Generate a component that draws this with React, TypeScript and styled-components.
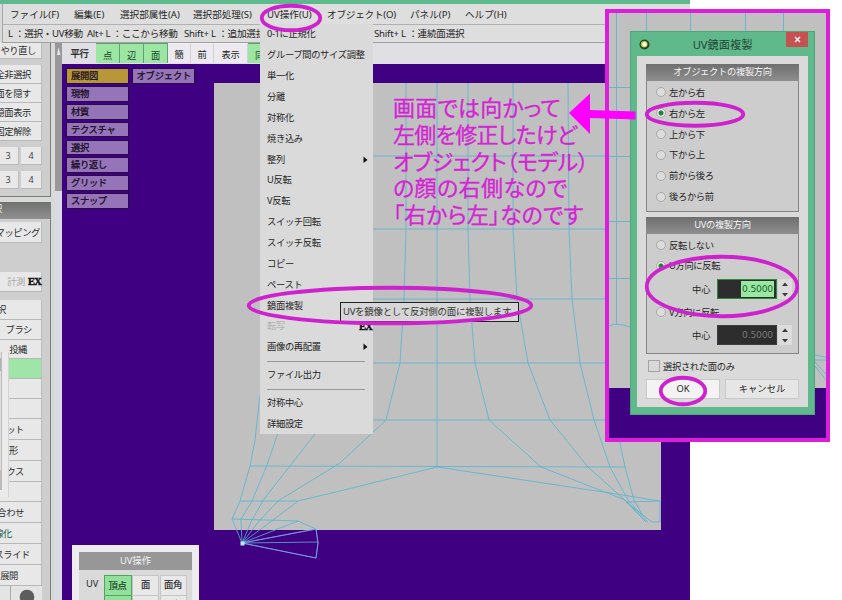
import React from "react";
import styled, { createGlobalStyle, css } from "styled-components";

const cjk = `"Noto Sans", "Noto Sans CJK JP", sans-serif`;
const magenta = "#cf22cf";

const GlobalStyle = createGlobalStyle`
  * { box-sizing: border-box; }
  body { margin: 0; background: #fff; font-family: ${cjk}; font-size: 9.3px; color: #262626; overflow: hidden; }
`;

const Page = styled.div`
  position: relative;
  width: 842px;
  height: 600px;
  overflow: hidden;
  background: #fff;
`;

const AppWindow = styled.div`
  display: flex;
  flex-direction: column;
  width: 690px;
  height: 600px;
  overflow: hidden;
  background: #d9d9d9;
`;

const TitleStrip = styled.div`
  flex: none;
  height: 4px;
  background: #5cba8c;
`;

const Bars = styled.div`
  flex: none;
  height: 39px;
  margin-left: 2px;
  border-left: 1px solid #a8a8a8;
  border-bottom: 1px solid #a0a0a0;
  background: #dedede;
`;

const Bar = styled.div<{ $h: number; $line?: boolean }>`
  display: flex;
  align-items: center;
  height: ${(p) => p.$h}px;
  padding-bottom: 1px;
  border-bottom: ${(p) => (p.$line ? "1px solid #b0b0b0" : "none")};
`;

const BarText = styled.span<{ $w: number; $ls?: number; $size?: number }>`
  flex: none;
  width: ${(p) => p.$w}px;
  white-space: nowrap;
  font-size: ${(p) => p.$size ?? 9.6}px;
  letter-spacing: ${(p) => p.$ls ?? 0}px;
`;

const Body = styled.div`
  display: flex;
  flex: 1;
  min-height: 0;
`;

const Sidebar = styled.aside`
  position: relative;
  flex: none;
  width: 55px;
  display: flex;
  flex-direction: column;
  gap: 5px;
  background: #d8dad8;
`;

const Group = styled.div<{ $h: number }>`
  flex: none;
  width: 51px;
  height: ${(p) => p.$h}px;
  padding-right: 8px;
  background: #cecece;
  border-right: 1px solid #7c7c7c;
  border-bottom: 1px solid #7c7c7c;
  overflow: hidden;
`;

const GroupHeader = styled.div`
  height: 17px;
  margin-right: -8px;
  text-indent: -7px;
  line-height: 13px;
  color: #eee;
  background: linear-gradient(#707070, #909090);
`;

const SideButton = styled.div<{ $h?: number; $pr?: number; $mt?: number; $tone?: string; $color?: string; $ls?: number }>`
  display: flex;
  align-items: center;
  justify-content: flex-end;
  width: 42px;
  height: ${(p) => p.$h ?? 19}px;
  margin-top: ${(p) => p.$mt ?? 0}px;
  padding-right: ${(p) => p.$pr ?? 10}px;
  padding-bottom: 1px;
  white-space: nowrap;
  letter-spacing: ${(p) => p.$ls ?? -0.4}px;
  color: ${(p) => p.$color ?? "#2c2c2c"};
  background: ${(p) => p.$tone ?? "#e8e8e8"};
  border-bottom: 1px solid #b8b8b8;
  border-right: 1px solid #bdbdbd;
`;

const NumberRow = styled.div`
  display: grid;
  grid-template-columns: 19px 21px;
  gap: 2px;
  height: 18px;
  margin-top: 6px;
  line-height: 17px;
  color: #444;
  font-size: 9px;

  & > span {
    text-align: center;
    background: #e8e8e8;
    border-right: 1px solid #bdbdbd;
    border-bottom: 1px solid #b8b8b8;
  }
  & > span:first-child { padding-right: 2px; }
`;

const Ex = styled.b`
  font-family: "Liberation Serif", serif;
  font-size: 10.5px;
  font-weight: 700;
  letter-spacing: -0.8px;
  color: #111;
  -webkit-text-stroke: 0.4px #111;
`;

const Faded = styled.span`
  color: #aaa;
  margin-right: 3px;
`;

const DockedFlap = styled.div`
  position: absolute;
  left: 0;
  top: 309px;
  width: 9px;
  height: 145px;
  padding: 0 6px 7px 0;
  background: #ebebeb;
  border-right: 1px solid #d4d4d4;

  &::before {
    content: "";
    display: block;
    height: 100%;
    background: linear-gradient(#e0e0e0 0 6px, #b4b4b4 6px 19px, #dedede 19px 118px, #bdbdbd 118px);
    border-right: 1px solid #bbb;
  }
`;

const Knob = styled.div`
  display: grid;
  grid-template-columns: 10px 32px;
  width: 42px;
  height: 16px;
  background: #e4e4e4;
  overflow: hidden;

  & > span + span { border-left: 1px solid #aaa; padding: 3px 0 0 8px; }
`;

const ScrollTrack = styled.div`
  flex: none;
  width: 7px;
  background: linear-gradient(#98989a 0 148px, #dadae4 148px);
  & svg { display: block; }
`;

const Main = styled.div`
  flex: 1;
  display: flex;
  flex-direction: column;
  min-width: 0;
`;

const Toolbar = styled.div`
  flex: none;
  display: flex;
  height: 21px;
  padding-left: 1px;
  background: #e0dfe4;
`;

const Tool = styled.span<{ $w: number; $on?: boolean; $plain?: boolean }>`
  display: flex;
  align-items: center;
  justify-content: center;
  width: ${(p) => p.$w}px;
  height: 20px;
  padding-top: ${(p) => (p.$on ? 2 : 0)}px;
  white-space: nowrap;
  letter-spacing: -0.3px;
  -webkit-text-stroke: ${(p) => (p.$plain ? 0.3 : 0)}px;
  ${(p) =>
    !p.$plain &&
    css`
      background: ${p.$on ? "#9be6a2" : "#eceaf0"};
      border-right: 1px solid ${p.$on ? "#63a070" : "#d2d0d6"};
      border-top: 1px solid ${p.$on ? "#63a070" : "#f2f2f2"};
      color: ${p.$on ? "#1c4426" : "#222"};
    `}
`;

const Canvas = styled.div`
  position: relative;
  flex: 1;
  background: #400082;
  overflow: hidden;
`;

const Mesh = styled.svg`
  position: absolute;
  left: -62px;
  top: -64px;
  display: block;
`;

const LabelGrid = styled.div`
  position: absolute;
  left: 4px;
  top: 4px;
  display: grid;
  grid-template-columns: 63px 63px;
  grid-auto-rows: 15.8px;
  gap: 2.1px 2.5px;
`;

const Label = styled.div<{ $gold?: boolean; $ls?: number }>`
  padding-left: 4px;
  line-height: 14.5px;
  white-space: nowrap;
  -webkit-text-stroke: 0.25px #150b20;
  letter-spacing: ${(p) => p.$ls ?? -0.35}px;
  color: #150b20;
  background: ${(p) => (p.$gold ? "#b8973a" : "#9674b8")};
  border: 1px solid #2a0c4a;
  &:nth-child(n + 3) { grid-column: 1; }
`;

const UvPanel = styled.div`
  position: absolute;
  left: 10px;
  top: 481px;
  width: 127px;
  height: 70px;
  border: 7px solid #ececf0;
  background: #dadada;
`;

const UvHeader = styled.div`
  height: 18px;
  line-height: 17px;
  text-align: center;
  color: #f4f4f4;
  background: #979797;
`;

const UvRow = styled.div`
  display: grid;
  grid-template-columns: 24px 28px 27px 27px;
  gap: 0.5px;
  margin-top: 4.5px;
  height: 19px;
  & + & { margin-top: 1px; }
  & > span:first-child { padding-left: 7px; line-height: 18px; }
`;

const UvToggle = styled.span<{ $on?: boolean }>`
  line-height: ${(p) => (p.$on ? 19 : 17)}px;
  text-align: center;
  letter-spacing: -0.2px;
  -webkit-text-stroke: 0.2px;
  background: ${(p) => (p.$on ? "#93e09d" : "#e8e8e8")};
  border: 1px solid ${(p) => (p.$on ? "#4fa55c" : "#c6c6c6")};
  color: ${(p) => (p.$on ? "#15461d" : "#2a2a2a")};
`;

const Dropdown = styled.div`
  position: absolute;
  left: 260px;
  top: 24px;
  width: 113px;
  height: 410px;
  padding: 0 0 0 7px;
  background: #dadada;
`;

const MenuItem = styled.div<{ $dim?: boolean }>`
  display: flex;
  align-items: center;
  justify-content: space-between;
  height: 20.87px;
  padding-right: 5px;
  padding-bottom: 2px;
  white-space: nowrap;
  font-size: 9.3px;
  letter-spacing: -0.35px;
  color: ${(p) => (p.$dim ? "#b2b2b2" : "#262626")};
  & b { margin-right: -4px; margin-top: 3px; }
`;

const Rule = styled.div`
  height: 1px;
  width: 98px;
  margin: 3px 0;
  background: #979797;
`;

const Tooltip = styled.div`
  position: absolute;
  left: 340px;
  top: 302px;
  width: 179px;
  height: 20px;
  padding-left: 2px;
  line-height: 17px;
  white-space: nowrap;
  font-size: 9.5px;
  letter-spacing: -0.3px;
  color: #333;
  background: #d6d6d6;
  border: 1px solid #222;
`;

const Note = styled.div`
  position: absolute;
  left: 393px;
  top: 93px;
  color: #d424d4;
  font-family: "Noto Sans CJK JP", sans-serif;
  font-size: 22px;
  line-height: 26.8px;
  white-space: nowrap;
  font-feature-settings: "palt";
  -webkit-text-stroke: 0.3px #d424d4;
`;

const NoteLine = styled.div<{ $ls: number }>`
  letter-spacing: ${(p) => p.$ls}px;
`;

const Inset = styled.div`
  position: absolute;
  left: 605px;
  top: 9px;
  width: 225px;
  height: 433px;
  padding: 18px 0 0 21px;
  border: 4px solid #dc1edc;
  background: linear-gradient(#c0c0c0 0 375px, #400082 375px);
  overflow: hidden;
`;

const InsetMesh = styled.svg`
  position: absolute;
  left: 0;
  top: 0;
`;

const Dialog = styled.div`
  position: relative;
  width: 185px;
  height: 384px;
  padding: 0 7px 8px;
  background: #5fb98b;
  border: 1px solid #4ea77b;
`;

const DialogTitle = styled.div`
  display: flex;
  align-items: center;
  height: 24px;
  & > svg { flex: none; margin-left: 1px; }
  & > span {
    flex: none;
    width: 136px;
    padding-left: 9px;
    padding-bottom: 1px;
    text-align: center;
    font-size: 11.2px;
    color: #1f4534;
  }
`;

const Close = styled.div`
  flex: none;
  align-self: flex-start;
  width: 22px;
  height: 15px;
  display: grid;
  place-items: center;
  background: #c75050;
`;

const DialogBody = styled.div`
  height: 351px;
  margin: 0 -1px;
  padding: 8px 9px 0;
  background: #dadada;
`;

const Fieldset = styled.div<{ $h: number }>`
  width: 153px;
  height: ${(p) => p.$h}px;
  margin-bottom: 5px;
  background: #cdcdcd;
  border: 1px solid #858585;
  border-top: 0;
`;

const Legend = styled.div`
  height: 17px;
  margin: 0 -1px 1px;
  line-height: 15px;
  text-align: center;
  letter-spacing: -0.35px;
  color: #f6f6f6;
  background: linear-gradient(#6f6f6f, #8e8e8e);
`;

const Option = styled.div<{ $h?: number }>`
  display: flex;
  align-items: center;
  gap: 3px;
  height: ${(p) => p.$h ?? 20.85}px;
  padding-left: 9px;
  padding-bottom: 1px;
  letter-spacing: -0.35px;
  white-space: nowrap;
`;

const Radio = styled.span<{ $on?: boolean }>`
  width: 10px;
  height: 10px;
  margin-top: 1px;
  border: 1px solid #a9a9a9;
  border-radius: 50%;
  background: ${(p) => (p.$on ? "radial-gradient(circle, #1d8136 0 2px, #e8e8e8 3px)" : "#dcdcdc")};
`;

const CenterRow = styled.div<{ $h: number }>`
  display: flex;
  align-items: center;
  height: ${(p) => p.$h}px;
  padding-left: 45px;
  & > span { width: 25px; padding-bottom: 1px; }
`;

const NumberBox = styled.div<{ $active?: boolean }>`
  display: flex;
  justify-content: flex-end;
  width: 60px;
  height: 20px;
  padding: 1px 2px;
  background: #2d2d2d;
  border: 1px solid ${(p) => (p.$active ? "#2a8a3e" : "#3c3c3c")};
  color: ${(p) => (p.$active ? "#215f2c" : "#777")};
  & > span {
    padding: 0 1px;
    line-height: 16px;
    font-family: "DejaVu Sans", sans-serif;
    font-size: 9.2px;
    letter-spacing: -0.2px;
    background: ${(p) => (p.$active ? "#99e8a2" : "transparent")};
  }
`;

const Spinner = styled.svg`
  margin-left: 1px;
  background: #dcdcdc;
`;

const CheckRow = styled.div`
  display: flex;
  align-items: center;
  gap: 3px;
  height: 15px;
  margin-top: -1px;
  padding-left: 2px;
  letter-spacing: -0.35px;
  &::before {
    content: "";
    width: 10px;
    height: 10px;
    border: 1px solid #a4a4a4;
    background: #d8d8d8;
  }
`;

const ButtonRow = styled.div`
  display: grid;
  grid-template-columns: 74px 74px;
  gap: 5px;
  margin-top: 6px;
`;

const DialogButton = styled.div<{ $bright?: boolean }>`
  height: 20px;
  line-height: 17px;
  text-align: center;
  background: ${(p) => (p.$bright ? "#f3f3f3" : "#e6e6e6")};
  border: 1px solid #c9c9c9;
`;

const Marks = styled.svg`
  position: absolute;
  left: 0;
  top: 0;
`;

const Arrow = () => (
  <svg width="5" height="8" viewBox="0 0 5 8">
    <path d="M0.500 1.500L4.500 5L0.500 8Z" fill="#111" />
  </svg>
);

const menuItems = [
  "0-1に正規化", "グループ間のサイズ調整", "単一化", "分離", "対称化", "焼き込み", "整列", "U反転",
  "V反転", "スイッチ回転", "スイッチ反転", "コピー", "ペースト", "鏡面複製", "転写", "画像の再配置",
];

const meshLines = [
  "373,156 661,156", "373,229 661,229", "373,299 661,299", "373,363 661,363", "373,420 605,420",
  "250,466 625,467", "240,501 298,501",
  "406,83 406,229 404,299 400,363 386,420 340,463 278,501 260,520 242,543",
  "437,83 437,467",
  "468,83 468,229 470,299 475,363 489,420 541,467 625,500 646,522",
  "513,83 513,229 517,299 528,363 550,420 588,467 626,501 646,522",
  "568,83 569,229 572,299 580,363 594,420 610,467 628,500 648,522",
  "620,83 620,443 625,467 634,500 642,514",
  "437,467 340,491 298,501 273,520 242,543",
  "437,467 610,493 660,501 626,502 652,522 660,522 660,501",
  "260,395 255,440 250,466 240,501 232,519 242,543",
  "279,430 267,465 252,501 241,519 242,543",
  "318,430 290,466 264,499 252,520 242,543",
  "232,519 298,521 316,529 318,543 316,558 242,543",
  "298,521 242,543 316,529", "242,543 318,542",
];

const sideTools: Array<[string, number, number]> = [
  ["", 20, 11], ["", 20, 11], ["ット", 21, 17], ["形", 21, 23], ["クス", 21, 17], ["", 20, 11],
  ["合わせ", 21, 17], ["線化", 21, 29], ["スライド", 21, 11], ["展開", 21, 23],
];

const Ring = (p: { x: number; y: number; w: number; h: number }) => (
  <ellipse
    cx={p.x + p.w / 2}
    cy={p.y + p.h / 2}
    rx={p.w / 2 - 1.75}
    ry={p.h / 2 - 1.75}
    fill="none"
    stroke={magenta}
    strokeWidth="3.8"
  />
);

const Spin = () => (
  <Spinner width="14" height="20" viewBox="0 0 14 20">
    <path d="M4 7L7 3.500L10 7ZM4 14L7 17.500L10 14Z" fill="#3b3b3b" />
  </Spinner>
);

export default function App() {
  return (
    <Page>
      <GlobalStyle />
      <AppWindow>
        <TitleStrip />
        <Bars>
          <Bar $h={21} $line>
            <BarText $w={7} />
            <BarText $w={64}>ファイル(F)</BarText>
            <BarText $w={46}>編集(E)</BarText>
            <BarText $w={73}>選択部属性(A)</BarText>
            <BarText $w={74}>選択部処理(S)</BarText>
            <BarText $w={60}>UV操作(U)</BarText>
            <BarText $w={83} $ls={-0.2}>オブジェクト(O)</BarText>
            <BarText $w={55}>パネル(P)</BarText>
            <BarText $w={50}>ヘルプ(H)</BarText>
          </Bar>
          <Bar $h={17}>
            <BarText $w={5} />
            <BarText $w={79} $ls={-0.3}>L ：選択・UV移動</BarText>
            <BarText $w={97} $ls={-0.3}>Alt+ L ：ここから移動</BarText>
            <BarText $w={190} $ls={-0.2}>Shift+ L ：追加選択</BarText>
            <BarText $w={100} $ls={-0.2}>Shift+ L ：連続面選択</BarText>
          </Bar>
        </Bars>
        <Body>
          <Sidebar>
            <Group $h={154}>
              <SideButton $h={16} $pr={5}>やり直し</SideButton>
              <SideButton $mt={6}>全非選択</SideButton>
              <SideButton>面を隠す</SideButton>
              <SideButton>隠面表示</SideButton>
              <SideButton>固定解除</SideButton>
              <NumberRow><span>3</span><span>4</span></NumberRow>
              <NumberRow><span>3</span><span>4</span></NumberRow>
            </Group>
            <Group $h={420}>
              <GroupHeader>択</GroupHeader>
              <SideButton $mt={3} $h={21} $pr={1}>マッピング</SideButton>
              <SideButton $mt={29} $h={20} $pr={0}><Faded>計測</Faded><Ex>EX</Ex></SideButton>
              <SideButton $mt={8} $h={20} $pr={35}>選択</SideButton>
              <SideButton $h={20} $pr={9}>ブラシ</SideButton>
              <SideButton $h={19} $pr={14}>投縄</SideButton>
              <SideButton $h={20} $tone="#9fe5a8" />
              {sideTools.map(([t, h, pr], i) => (
                <SideButton key={i} $h={h} $pr={pr} $color={t === "線化" ? "#245c48" : undefined}>{t}</SideButton>
              ))}
              <Knob>
                <span />
                <span><svg width="16" height="16" viewBox="0 0 16 16"><circle cx="8" cy="8" r="7.3" fill="#5d5d5d" /></svg></span>
              </Knob>
            </Group>
            <DockedFlap />
          </Sidebar>
          <ScrollTrack>
            <svg width="7" height="14" viewBox="0 0 7 14"><path d="M2 12L3.5 4L5.5 12Z" fill="#e4e4e4" /></svg>
          </ScrollTrack>
          <Main>
            <Toolbar>
              <Tool $w={33} $plain>平行</Tool>
              <Tool $w={24} $on>点</Tool>
              <Tool $w={24} $on>辺</Tool>
              <Tool $w={24} $on>面</Tool>
              <Tool $w={23}>簡</Tool>
              <Tool $w={23}>前</Tool>
              <Tool $w={34}>表示</Tool>
              <Tool $w={24} $on>同</Tool>
            </Toolbar>
            <Canvas>
              <Mesh width="690" height="600" viewBox="0 0 690 600">
                <rect x="214" y="83" width="447" height="447" fill="#c0c0c0" />
                <g fill="none" stroke="#55b4d0" strokeWidth="0.8">
                  {meshLines.map((p) => <polyline key={p} points={p} />)}
                </g>
                <path d="M242 543L316 529L318 543L316 558Z" fill="none" stroke="#8fa0f0" strokeWidth="0.7" />
                <rect x="240.500" y="541.500" width="4" height="4" fill="#bdf0ff" />
              </Mesh>
              <LabelGrid>
                <Label $gold>展開図</Label>
                <Label $ls={-0.2}>オブジェクト</Label>
                {["現物", "材質", "テクスチャ", "選択", "繰り返し", "グリッド", "スナップ"].map((t) => (
                  <Label key={t}>{t}</Label>
                ))}
              </LabelGrid>
              <UvPanel>
                <UvHeader>UV操作</UvHeader>
                <UvRow><span>UV</span><UvToggle $on>頂点</UvToggle><UvToggle>面</UvToggle><UvToggle>面角</UvToggle></UvRow>
                <UvRow><span /><UvToggle $on>頂点</UvToggle><UvToggle>面</UvToggle><UvToggle>面角</UvToggle></UvRow>
              </UvPanel>
            </Canvas>
          </Main>
        </Body>
      </AppWindow>

      <Dropdown>
        {menuItems.map((t) => (
          <MenuItem key={t} $dim={t === "転写"}>
            {t}
            {(t === "整列" || t === "画像の再配置") && <Arrow />}
            {t === "転写" && <Ex>EX</Ex>}
          </MenuItem>
        ))}
        <Rule />
        <MenuItem>ファイル出力</MenuItem>
        <Rule />
        <MenuItem>対称中心</MenuItem>
        <MenuItem>詳細設定</MenuItem>
      </Dropdown>
      <Tooltip>UVを鏡像として反対側の面に複製します。</Tooltip>

      <Inset>
        <InsetMesh width="217" height="425" viewBox="609 13 217 425">
          <g fill="none" stroke="#55b4d0" strokeWidth="0.8">
            <path d="M616.500 13V325M646.500 13V31M690.500 13V31M745.500 13V31M783.500 13V31" />
            <path d="M609 87.500H630M609 156.500H630M609 221.500H630M609 278.500H630M609 326Q617 322 630 327" />
            <path d="M815 355L826 357M815 360H826M815 366L826 380M815 362L826 374" />
          </g>
        </InsetMesh>
        <Dialog>
          <DialogTitle>
            <svg width="11" height="11" viewBox="0 0 11 11">
              <circle cx="5.500" cy="5.500" r="5" fill="#284818" />
              <circle cx="5.200" cy="5.200" r="3.300" fill="#b5c83a" />
              <circle cx="5.500" cy="5.200" r="2.200" fill="#fff" />
            </svg>
            <span>UV鏡面複製</span>
            <Close>
              <svg width="7" height="7" viewBox="0 0 7 7"><path d="M1 1L6 6M6 1L1 6" stroke="#fff" strokeWidth="1.300" /></svg>
            </Close>
          </DialogTitle>
          <DialogBody>
            <Fieldset $h={148}>
              <Legend>オブジェクトの複製方向</Legend>
              {["左から右", "右から左", "上から下", "下から上", "前から後ろ", "後ろから前"].map((t) => (
                <Option key={t}><Radio $on={t === "右から左"} />{t}</Option>
              ))}
            </Fieldset>
            <Fieldset $h={137}>
              <Legend>UVの複製方向</Legend>
              <Option $h={20}><Radio />反転しない</Option>
              <Option $h={21}><Radio $on />U方向に反転</Option>
              <CenterRow $h={26}><span>中心</span><NumberBox $active><span>0.5000</span></NumberBox><Spin /></CenterRow>
              <Option $h={20}><Radio />V方向に反転</Option>
              <CenterRow $h={26}><span>中心</span><NumberBox><span>0.5000</span></NumberBox><Spin /></CenterRow>
            </Fieldset>
            <CheckRow>選択された面のみ</CheckRow>
            <ButtonRow>
              <DialogButton $bright>OK</DialogButton>
              <DialogButton>キャンセル</DialogButton>
            </ButtonRow>
          </DialogBody>
        </Dialog>
      </Inset>

      <Note>
        <NoteLine $ls={0.2}>画面では向かって</NoteLine>
        <NoteLine $ls={-0.7}>左側を修正したけど</NoteLine>
        <NoteLine $ls={-0.4}>オブジェクト（モデル）</NoteLine>
        <NoteLine $ls={0.4}>の顔の右側なので</NoteLine>
        <NoteLine $ls={0.1}>「右から左」なのです</NoteLine>
      </Note>

      <Marks width="842" height="600" viewBox="0 0 842 600">
        <Ring x={260} y={4} w={62} h={28} />
        <Ring x={247} y={286} w={286} h={39} />
        <Ring x={645} y={101} w={100} h={26.5} />
        <Ring x={645} y={255} w={154} h={63} />
        <Ring x={659} y={376} w={48} h={30} />
        <path d="M569 113L590 93.500V110L635.500 111.500V119.500L590 118V134Z" fill="#ff00ff" />
      </Marks>
    </Page>
  );
}
